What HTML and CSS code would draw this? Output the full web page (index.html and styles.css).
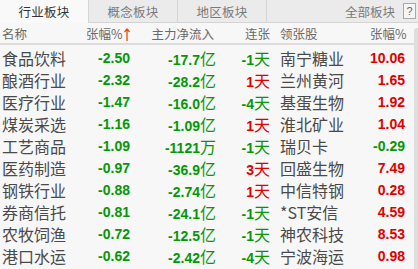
FILE: index.html
```html
<!DOCTYPE html>
<html lang="zh">
<head>
<meta charset="utf-8">
<link rel="stylesheet" href="styles.css">
</head>
<body>
<div class="panel">
  <div class="tabs">
    <div class="tab active">行业板块</div>
    <div class="tab">概念板块</div>
    <div class="tab">地区板块</div>
    <div class="tab-rest"><span>全部板块</span><span class="help">?</span></div>
  </div>
  <div class="row head">
    <span class="c-name">名称</span>
    <span class="c-pct">张幅%<svg class="arrow" width="6" height="13" viewBox="0 0 6 13"><path d="M3 1V13M0.5 4L3 1L5.5 4" fill="none" stroke="#f04a00" stroke-width="1.3"/></svg></span>
    <span class="c-flow">主力净流入</span>
    <span class="c-streak">连张</span>
    <span class="c-lead">领张股</span>
    <span class="c-lpct">张幅%</span>
  </div>
  <div class="rows">
    <div class="row"><span class="c-name">食品饮料</span><span class="c-pct g">-2.50</span><span class="c-flow g">-17.7<i>亿</i></span><span class="c-streak g">-1<i>天</i></span><span class="c-lead">南宁糖业</span><span class="c-lpct r">10.06</span></div>
    <div class="row"><span class="c-name">酿酒行业</span><span class="c-pct g">-2.32</span><span class="c-flow g">-28.2<i>亿</i></span><span class="c-streak r">1<i>天</i></span><span class="c-lead">兰州黄河</span><span class="c-lpct r">1.65</span></div>
    <div class="row"><span class="c-name">医疗行业</span><span class="c-pct g">-1.47</span><span class="c-flow g">-16.0<i>亿</i></span><span class="c-streak g">-4<i>天</i></span><span class="c-lead">基蛋生物</span><span class="c-lpct r">1.92</span></div>
    <div class="row"><span class="c-name">煤炭采选</span><span class="c-pct g">-1.16</span><span class="c-flow g">-1.09<i>亿</i></span><span class="c-streak r">1<i>天</i></span><span class="c-lead">淮北矿业</span><span class="c-lpct r">1.04</span></div>
    <div class="row"><span class="c-name">工艺商品</span><span class="c-pct g">-1.09</span><span class="c-flow g">-1121<i>万</i></span><span class="c-streak g">-1<i>天</i></span><span class="c-lead">瑞贝卡</span><span class="c-lpct g">-0.29</span></div>
    <div class="row"><span class="c-name">医药制造</span><span class="c-pct g">-0.97</span><span class="c-flow g">-36.9<i>亿</i></span><span class="c-streak r">3<i>天</i></span><span class="c-lead">回盛生物</span><span class="c-lpct r">7.49</span></div>
    <div class="row"><span class="c-name">钢铁行业</span><span class="c-pct g">-0.88</span><span class="c-flow g">-2.74<i>亿</i></span><span class="c-streak r">1<i>天</i></span><span class="c-lead">中信特钢</span><span class="c-lpct r">0.28</span></div>
    <div class="row"><span class="c-name">券商信托</span><span class="c-pct g">-0.81</span><span class="c-flow g">-24.1<i>亿</i></span><span class="c-streak g">-1<i>天</i></span><span class="c-lead">*ST安信</span><span class="c-lpct r">4.59</span></div>
    <div class="row"><span class="c-name">农牧饲渔</span><span class="c-pct g">-0.72</span><span class="c-flow g">-12.5<i>亿</i></span><span class="c-streak g">-1<i>天</i></span><span class="c-lead">神农科技</span><span class="c-lpct r">8.53</span></div>
    <div class="row"><span class="c-name">港口水运</span><span class="c-pct g">-0.62</span><span class="c-flow g">-2.42<i>亿</i></span><span class="c-streak g">-4<i>天</i></span><span class="c-lead">宁波海运</span><span class="c-lpct r">0.98</span></div>
  </div>
  <div class="scroll"></div>
</div>
</body>
</html>
```
FILE: styles.css
```css
* { box-sizing: border-box; }
html, body { margin: 0; padding: 0; }
body {
  width: 418px;
  height: 269px;
  overflow: hidden;
  background: #f7f7f7;
  font-family: "Noto Sans CJK SC", "DejaVu Sans", sans-serif;
  color: #4a4a4a;
}
.panel { position: relative; width: 418px; height: 269px; }
.tabs {
  display: flex;
  height: 23px;
  border-bottom: 1px solid #d4d4d4;
  background: #ebebeb;
}
.tab {
  width: 89px;
  display: flex;
  align-items: center;
  justify-content: center;
  font-size: 12.5px;
  color: #7a7a7a;
  border-right: 1px solid #d4d4d4;
  letter-spacing: 0.3px;
}
.tab.active {
  background: #f9f9f9;
  color: #333;
  height: 23px;
  margin-bottom: -1px;
}
.tab-rest {
  flex: 1;
  display: flex;
  align-items: center;
  justify-content: flex-end;
  gap: 8px;
  padding-right: 2px;
  font-size: 12.5px;
  color: #7a7a7a;
}
.help {
  width: 13px;
  height: 16px;
  border: 1px solid #a8a8a8;
  background: #f5f5f5;
  font-family: "Liberation Sans", sans-serif;
  font-size: 11px;
  color: #666;
  display: flex;
  align-items: center;
  justify-content: center;
}
.row {
  display: grid;
  grid-template-columns: 84px 44px 86px 54px 100px 35px;
  padding-left: 2px;
  height: 22px;
  align-items: center;
  white-space: nowrap;
}
.row.head {
  height: 22px;
  border-bottom: 2px solid #dcdcdc;
  font-size: 12.5px;
  color: #6a6a6a;
}
.rows { padding-top: 1px; }
.rows .row { font-size: 16px; }
.c-name, .c-lead { text-align: left; }
.c-pct, .c-flow, .c-streak, .c-lpct { text-align: right; }
.c-lead { padding-left: 10px; }
.head .c-flow { padding-right: 2px; }
.head .c-pct { padding-right: 2px; }
.arrow { margin-left: 1px; vertical-align: -2px; }
.rows .c-pct, .rows .c-flow, .rows .c-streak, .rows .c-lpct {
  font-family: "Liberation Sans", Arial, sans-serif;
  font-weight: bold;
  font-size: 14px;
}
.rows i {
  font-style: normal;
  font-weight: normal;
  font-size: 16px;
  font-family: "Noto Sans CJK SC", sans-serif;
}
.g { color: #079607; }
.r { color: #e00000; }
.scroll {
  position: absolute;
  right: 0;
  top: 28px;
  width: 4px;
  height: 241px;
  background: #dedede;
  border-radius: 3px 0 0 0;
}
```
